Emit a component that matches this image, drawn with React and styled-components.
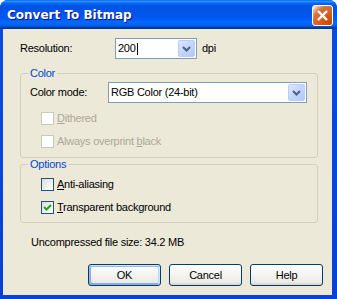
import React from 'react';
import styled, { createGlobalStyle } from 'styled-components';

const Global = createGlobalStyle`
  html, body { margin: 0; padding: 0; background: #ffffff; }
  body { font-family: "Liberation Sans", Arial, sans-serif; font-size: 11px; color: #000; letter-spacing: -0.25px; }
  * { box-sizing: border-box; }
`;

const Window = styled.div`
  width: 337px;
  height: 299px;
  display: flex;
  flex-direction: column;
  background: #0A4BE0;
  border-radius: 8px 8px 0 0;
  overflow: hidden;
`;

const TitleBar = styled.div`
  height: 29px;
  flex: none;
  display: flex;
  align-items: flex-start;
  padding: 0 4px 0 7px;
  background: linear-gradient(to bottom, #0058EE 0%, #3593FF 4%, #288EFF 6%, #127DFF 8%, #036FFC 10%, #0262EE 14%, #0057E5 20%, #0054E3 24%, #0055EB 56%, #005BF5 66%, #026AFE 76%, #0062EF 86%, #0052D6 92%, #0040AB 94%, #003092 100%);
`;

const Title = styled.div`
  margin-top: 2px;
  line-height: 27px;
  font-family: "DejaVu Sans", Verdana, sans-serif;
  font-weight: bold;
  font-size: 12px;
  color: #ffffff;
  text-shadow: 1px 1px #0F1089;
  letter-spacing: 0;
`;

const CloseButton = styled.div`
  margin: 5px 0 0 auto;
  width: 21px;
  height: 21px;
  border: 1px solid #ffffff;
  border-radius: 3px;
  background: radial-gradient(circle at 90% 90%, #cc4600 0%, #dc6527 55%, #cd7546 70%, #ffccb2 90%, #ffffff 100%);
  display: flex;
  align-items: center;
  justify-content: center;
`;

const Frame = styled.div`
  flex: 1;
  display: flex;
  padding: 0 5px 4px 3px;
  background: linear-gradient(to bottom, #0A4BE0, #0841D4);
`;

const Body = styled.div`
  flex: 1;
  background: #ECE9D8;
  display: flex;
  flex-direction: column;
  padding: 9px 9px 9px 17px;
`;

const Row = styled.div`
  display: flex;
  align-items: center;
  height: 21px;
`;

const FieldLabel = styled.div`
  width: ${p => p.$w}px;
  flex: none;
  line-height: 13px;
`;

const Combo = styled.div`
  height: 21px;
  ${p => (p.$w ? `width: ${p.$w}px; flex: none;` : 'flex: 1;')}
  border: 1px solid #7F9DB9;
  background: #ffffff;
  display: flex;
  align-items: center;
  padding: 1px 1px 1px 2px;
`;

const ComboValue = styled.div`
  flex: 1;
  display: flex;
  align-items: center;
  line-height: 13px;
  white-space: nowrap;
  overflow: hidden;
`;

const Caret = styled.span`
  display: inline-block;
  width: 1px;
  height: 12px;
  background: #000;
  margin-left: 1px;
`;

const DropButton = styled.div`
  width: 17px;
  height: 17px;
  flex: none;
  border: 1px solid #BCCDF5;
  border-radius: 2px;
  background: linear-gradient(135deg, #DDE8FE 0%, #C3D5FC 50%, #B2C8F7 100%);
  display: flex;
  align-items: center;
  justify-content: center;
`;

const Unit = styled.div`
  margin-left: 5px;
  line-height: 13px;
`;

const Group = styled.fieldset`
  margin: ${p => p.$mt}px 5px 0 0;
  padding: ${p => p.$pt}px 10px ${p => p.$pb}px 9px;
  border: 1px solid #D0D0BF;
  border-radius: 3px;
  min-width: 0;
`;

const Legend = styled.legend`
  padding: 0 2px;
  margin-left: -2px;
  color: #0046D5;
  line-height: 13px;
  font-size: 11px;
`;

const CheckRow = styled.div`
  display: flex;
  align-items: center;
  gap: 3px;
  margin: ${p => p.$mt}px 0 0 11px;
  line-height: 13px;
  color: ${p => (p.$disabled ? '#ACA899' : '#000000')};
`;

const Box = styled.div`
  width: 13px;
  height: 13px;
  flex: none;
  border: 1px solid ${p => (p.$disabled ? '#CAC8BB' : '#1C5180')};
  background: ${p => (p.$disabled ? '#ffffff' : 'linear-gradient(135deg, #DCDCD7 0%, #FFFFFF 100%)')};
  display: flex;
  align-items: center;
  justify-content: center;
`;

const SizeText = styled.div`
  margin: 13px 0 0 11px;
  line-height: 13px;
`;

const ButtonRow = styled.div`
  display: flex;
  justify-content: flex-end;
  gap: 8px;
  margin-top: 15px;
`;

const Button = styled.div`
  width: 73px;
  height: 22px;
  border: 1px solid #003C74;
  border-radius: 3px;
  background: linear-gradient(180deg, #ffffff 0%, #ECEBE6 86%, #D6D0C5 100%);
  display: flex;
  align-items: center;
  justify-content: center;
  line-height: 13px;
  box-shadow: ${p => (p.$default
    ? 'inset -1px 1px #cee7ff, inset 1px 2px #98b8ea, inset -2px 2px #bcd4f6, inset 1px -1px #89ade4, inset 2px -2px #89ade4'
    : 'none')};
`;

const Chevron = () => (
  <svg width="15" height="15" viewBox="0 0 15 15">
    <polyline points="4,6 7.5,9.5 11,6" fill="none" stroke="#4D6185" strokeWidth="2" />
  </svg>
);

const CloseX = () => (
  <svg width="19" height="19" viewBox="0 0 19 19">
    <line x1="5" y1="5" x2="14" y2="14" stroke="#ffffff" strokeWidth="2.4" />
    <line x1="14" y1="5" x2="5" y2="14" stroke="#ffffff" strokeWidth="2.4" />
  </svg>
);

const Check = () => (
  <svg width="11" height="11" viewBox="0 0 11 11">
    <polyline points="2,5 4.5,7.5 9,3" fill="none" stroke="#21A121" strokeWidth="2" />
  </svg>
);

const CheckItem = ({ mt, disabled, checked, children }) => (
  <CheckRow $mt={mt} $disabled={disabled}>
    <Box $disabled={disabled}>{checked && <Check />}</Box>
    <span>{children}</span>
  </CheckRow>
);

export default function App() {
  return (
    <>
      <Global />
      <Window>
        <TitleBar>
          <Title>Convert To Bitmap</Title>
          <CloseButton><CloseX /></CloseButton>
        </TitleBar>
        <Frame>
          <Body>
            <Row>
              <FieldLabel $w={95}>Resolution:</FieldLabel>
              <Combo $w={82}>
                <ComboValue>200<Caret /></ComboValue>
                <DropButton><Chevron /></DropButton>
              </Combo>
              <Unit>dpi</Unit>
            </Row>

            <Group $mt={8} $pt={2} $pb={9}>
              <Legend>Color</Legend>
              <Row>
                <FieldLabel $w={78}>Color mode:</FieldLabel>
                <Combo>
                  <ComboValue>RGB Color (24-bit)</ComboValue>
                  <DropButton><Chevron /></DropButton>
                </Combo>
              </Row>
              <CheckItem mt={9} disabled><u>D</u>ithered</CheckItem>
              <CheckItem mt={10} disabled>Always overprint <u>b</u>lack</CheckItem>
            </Group>

            <Group $mt={0} $pt={7} $pb={8}>
              <Legend>Options</Legend>
              <CheckItem mt={0}><u>A</u>nti-aliasing</CheckItem>
              <CheckItem mt={10} checked><u>T</u>ransparent background</CheckItem>
            </Group>

            <SizeText>Uncompressed file size: 34.2 MB</SizeText>

            <ButtonRow>
              <Button $default>OK</Button>
              <Button>Cancel</Button>
              <Button>Help</Button>
            </ButtonRow>
          </Body>
        </Frame>
      </Window>
    </>
  );
}
